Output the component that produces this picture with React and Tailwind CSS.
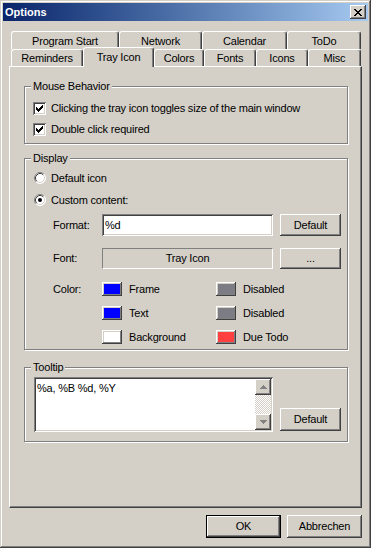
import React from 'react'

const raised = 'shadow-[inset_-1px_-1px_#404040,inset_1px_1px_#fff,inset_-2px_-2px_#808080,inset_2px_2px_#d4d0c8]'
const sunken = 'shadow-[inset_1px_1px_#808080,inset_-1px_-1px_#fff,inset_2px_2px_#404040,inset_-2px_-2px_#d4d0c8]'

function Button({ children, className = '' }) {
  return (
    <div className={`flex items-center justify-center bg-[#d4d0c8] ${raised} ${className}`}>
      {children}
    </div>
  )
}

function Check() {
  return (
    <div className={`w-[13px] h-[13px] bg-white ${sunken} flex items-center justify-center shrink-0`}>
      <svg width="7" height="7" viewBox="0 0 7 7" shapeRendering="crispEdges">
        <path d="M6 0h1v1h-1z M5 1h2v1h-2z M0 2h1v1h-1z M4 2h3v1h-3z M0 3h2v1h-2z M3 3h3v1h-3z M0 4h5v1h-5z M1 5h3v1h-3z M2 6h1v1h-1z" fill="#000" />
      </svg>
    </div>
  )
}

function Radio({ on }) {
  return (
    <svg width="12" height="12" viewBox="0 0 12 12" className="shrink-0">
      <circle cx="6" cy="6" r="5.5" fill="#fff" />
      <path d="M2.11 9.89 A5.5 5.5 0 0 1 9.89 2.11" stroke="#808080" fill="none" />
      <path d="M9.89 2.11 A5.5 5.5 0 0 1 2.11 9.89" stroke="#fff" fill="none" />
      <path d="M2.82 9.18 A4.5 4.5 0 0 1 9.18 2.82" stroke="#404040" fill="none" />
      <path d="M9.18 2.82 A4.5 4.5 0 0 1 2.82 9.18" stroke="#d4d0c8" fill="none" />
      {on && <circle cx="6" cy="6" r="2" fill="#000" />}
    </svg>
  )
}

function Group({ label, className = '', children }) {
  return (
    <fieldset className={`ml-[14px] w-[324px] border border-[#808080] shadow-[inset_1px_1px_#fff,1px_1px_#fff] ${className}`}>
      <legend className="ml-[6px] px-[2px] bg-[#d4d0c8] leading-[13px]">{label}</legend>
      {children}
    </fieldset>
  )
}

function Tab({ label, w, active }) {
  return (
    <div
      className={`relative flex items-center justify-center bg-[#d4d0c8] border-t border-l border-white border-r border-r-[#404040] rounded-t-[3px] shadow-[inset_-1px_0_#808080] ${w} ${active ? 'h-[20px] -mt-[2px] -mb-px z-10 pb-[1px]' : 'h-full pt-[1px]'}`}
    >
      {label}
    </div>
  )
}

function Swatch({ color, label }) {
  return (
    <div className="flex items-center w-[114px]">
      <div className={`w-[20px] h-[14px] p-[2px] bg-[#d4d0c8] ${raised}`}>
        <div className={`w-full h-full ${color}`} />
      </div>
      <span className="ml-[7px]">{label}</span>
    </div>
  )
}

export default function App() {
  return (
    <div className="w-[371px] h-[548px] bg-[#d4d0c8] p-[3px] flex flex-col text-[11px] leading-[13px] text-black tracking-[-0.2px] font-['Liberation_Sans',Arial,sans-serif] shadow-[inset_-1px_-1px_#404040,inset_1px_1px_#d4d0c8,inset_-2px_-2px_#808080,inset_2px_2px_#fff]">
      {/* title bar */}
      <div className="h-[18px] flex items-center justify-between bg-linear-to-r from-[#0a246a] to-[#a6caf0] pl-[2px] pr-[2px]">
        <span className="text-white font-bold tracking-normal">Options</span>
        <Button className="w-[16px] h-[14px]">
          <svg width="8" height="7" viewBox="0 0 8 7" shapeRendering="crispEdges">
            <path d="M0 0h2v1h-2z M6 0h2v1h-2z M1 1h2v1h-2z M5 1h2v1h-2z M2 2h4v1h-4z M3 3h2v1h-2z M2 4h4v1h-4z M1 5h2v1h-2z M5 5h2v1h-2z M0 6h2v1h-2z M6 6h2v1h-2z" fill="#000" />
          </svg>
        </Button>
      </div>

      <div className="px-[6px] mt-[10px] flex flex-col">
        {/* tabs */}
        <div className="pl-[2px] flex h-[18px]">
          <Tab label="Program Start" w="w-[108px]" />
          <Tab label="Network" w="w-[83px]" />
          <Tab label="Calendar" w="w-[85px]" />
          <Tab label="ToDo" w="w-[74px]" />
        </div>
        <div className="pl-[2px] flex h-[17px] items-end">
          <Tab label="Reminders" w="w-[72px]" />
          <Tab label="Tray Icon" w="w-[71px]" active />
          <Tab label="Colors" w="w-[50px]" />
          <Tab label="Fonts" w="w-[52px]" />
          <Tab label="Icons" w="w-[52px]" />
          <Tab label="Misc" w="w-[53px]" />
        </div>

        {/* page */}
        <div className="w-[353px] h-[442px] border-t border-l border-white border-r border-b border-r-[#404040] border-b-[#404040] shadow-[inset_-1px_-1px_#808080] flex flex-col pt-[13px]">
          <Group label="Mouse Behavior" className="pt-[5px] pb-[3px]">
            <div className="h-[21px] flex items-center pl-[8px] gap-[5px]">
              <Check />
              <span>Clicking the tray icon toggles size of the main window</span>
            </div>
            <div className="h-[21px] flex items-center pl-[8px] gap-[5px]">
              <Check />
              <span>Double click required</span>
            </div>
          </Group>

          <Group label="Display" className="mt-[8px] pt-[2px]">
            <div className="h-[22px] flex items-center pl-[9px] gap-[5px]">
              <Radio />
              <span>Default icon</span>
            </div>
            <div className="h-[22px] flex items-center pl-[9px] gap-[5px]">
              <Radio on />
              <span>Custom content:</span>
            </div>
            <div className="mt-[3px] h-[22px] flex items-center pl-[28px]">
              <span className="w-[49px]">Format:</span>
              <div className={`w-[171px] h-full bg-white ${sunken} flex items-center px-[3px]`}>%d</div>
              <Button className="ml-[7px] w-[61px] h-full">Default</Button>
            </div>
            <div className="mt-[12px] h-[21px] flex items-center pl-[28px]">
              <span className="w-[49px]">Font:</span>
              <div className="w-[171px] h-full border border-[#808080] border-r-white border-b-white flex items-center justify-center">Tray Icon</div>
              <Button className="ml-[7px] w-[61px] h-full">...</Button>
            </div>
            <div className="mt-[8px] flex pl-[28px]">
              <span className="w-[49px] h-[24px] flex items-center">Color:</span>
              <div className="flex flex-col">
                <div className="h-[24px] flex items-center">
                  <Swatch color="bg-[#0000ff]" label="Frame" />
                  <Swatch color="bg-[#7c7c84]" label="Disabled" />
                </div>
                <div className="h-[24px] flex items-center">
                  <Swatch color="bg-[#0000ff]" label="Text" />
                  <Swatch color="bg-[#7c7c84]" label="Disabled" />
                </div>
                <div className="h-[24px] flex items-center">
                  <Swatch color="bg-white" label="Background" />
                  <Swatch color="bg-[#ff4040]" label="Due Todo" />
                </div>
              </div>
            </div>
          </Group>

          <Group label="Tooltip" className="mt-[11px] pt-[3px] pb-[9px]">
            <div className="flex items-end pl-[9px]">
              <div className={`w-[239px] h-[55px] bg-white ${sunken} p-[2px] flex`}>
                <div className="flex-1 px-[1px] pt-[3px]">%a, %B %d, %Y</div>
                <div className="w-[16px] flex flex-col">
                  <Button className="h-[16px]">
                    <svg width="7" height="4" viewBox="0 0 7 4" shapeRendering="crispEdges"><path d="M3 0h1v1h-1z M2 1h3v1h-3z M1 2h5v1h-5z M0 3h7v1h-7z" fill="#808080" /></svg>
                  </Button>
                  <div className="flex-1 bg-[repeating-conic-gradient(#d4d0c8_0_25%,#fff_0_50%)] bg-[length:2px_2px]" />
                  <Button className="h-[16px]">
                    <svg width="7" height="4" viewBox="0 0 7 4" shapeRendering="crispEdges"><path d="M0 0h7v1h-7z M1 1h5v1h-5z M2 2h3v1h-3z M3 3h1v1h-1z" fill="#808080" /></svg>
                  </Button>
                </div>
              </div>
              <Button className="ml-[7px] mb-[1px] w-[61px] h-[23px]">Default</Button>
            </div>
          </Group>
        </div>

        {/* bottom buttons */}
        <div className="mt-[7px] flex justify-end gap-[6px]">
          <div className="w-[75px] h-[23px] border border-black">
            <Button className="w-full h-full">OK</Button>
          </div>
          <Button className="w-[75px] h-[23px]">Abbrechen</Button>
        </div>
      </div>
    </div>
  )
}
